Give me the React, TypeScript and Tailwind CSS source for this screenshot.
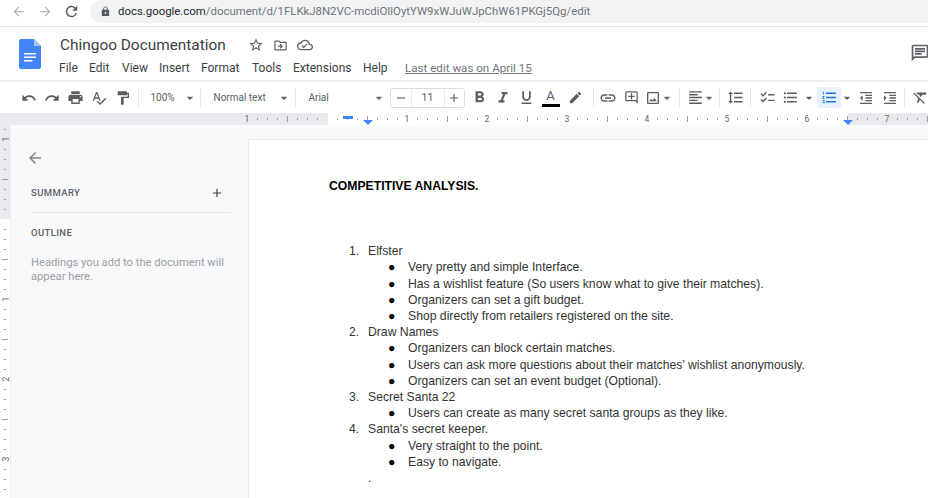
import type { ReactNode } from "react";
import {
  MdAdd,
  MdArrowBack,
  MdArrowDropDown,
  MdArrowForward,
  MdChecklist,
  MdEdit,
  MdFormatAlignLeft,
  MdFormatBold,
  MdFormatClear,
  MdFormatIndentDecrease,
  MdFormatIndentIncrease,
  MdFormatItalic,
  MdFormatLineSpacing,
  MdFormatListBulleted,
  MdFormatListNumbered,
  MdFormatPaint,
  MdFormatUnderlined,
  MdLink,
  MdLock,
  MdOutlineAddComment,
  MdOutlineChat,
  MdOutlineCloudDone,
  MdOutlineDriveFileMove,
  MdOutlineImage,
  MdPrint,
  MdRedo,
  MdRefresh,
  MdRemove,
  MdSpellcheck,
  MdStarBorder,
  MdUndo,
} from "react-icons/md";

const menus = [
  { label: "File", width: "w-[30px]" },
  { label: "Edit", width: "w-[33px]" },
  { label: "View", width: "w-[37px]" },
  { label: "Insert", width: "w-[42px]" },
  { label: "Format", width: "w-[51px]" },
  { label: "Tools", width: "w-[41px]" },
  { label: "Extensions", width: "w-[70px]" },
  { label: "Help", width: "w-[42px]" },
];

const sections = [
  {
    title: "Elfster",
    items: [
      "Very pretty and simple Interface.",
      "Has a wishlist feature (So users know what to give their matches).",
      "Organizers can set a gift budget.",
      "Shop directly from retailers registered on the site.",
    ],
  },
  {
    title: "Draw Names",
    items: [
      "Organizers can block certain matches.",
      "Users can ask more questions about their matches’ wishlist anonymously.",
      "Organizers can set an event budget (Optional).",
    ],
  },
  {
    title: "Secret Santa 22",
    items: ["Users can create as many secret santa groups as they like."],
  },
  {
    title: "Santa's secret keeper.",
    items: ["Very straight to the point.", "Easy to navigate."],
  },
];

const Sep = ({ className = "" }: { className?: string }) => (
  <div className={`h-[18px] w-px shrink-0 bg-[#e3e5e8] ${className}`} />
);

const Btn = ({ children, className = "w-[23.5px]" }: { children: ReactNode; className?: string }) => (
  <div className={`flex h-[24px] shrink-0 items-center justify-center ${className}`}>{children}</div>
);

const Caret = ({ className = "" }: { className?: string }) => (
  <MdArrowDropDown size={16} className={`shrink-0 text-[#5f6368] ${className}`} />
);

const Toolbar = () => (
  <div className="flex h-[31px] items-center overflow-hidden pl-[17px] text-[#5a5e63]">
    <Btn><MdUndo size={16} /></Btn>
    <Btn><MdRedo size={16} /></Btn>
    <Btn><MdPrint size={17} /></Btn>
    <Btn><MdSpellcheck size={16} /></Btn>
    <Btn><MdFormatPaint size={16} /></Btn>
    <Sep className="ml-[3px]" />
    <div className="flex w-[61px] shrink-0 items-center pl-[12px] text-[10px]">
      <span className="w-[31px]">100%</span>
      <Caret />
    </div>
    <Sep />
    <div className="flex w-[94px] shrink-0 items-center pl-[13px] text-[10px]">
      <span className="w-[62px]">Normal text</span>
      <Caret />
    </div>
    <Sep />
    <div className="flex w-[94px] shrink-0 items-center pl-[13px] text-[10px]">
      <span className="w-[62px]">Arial</span>
      <Caret />
    </div>
    <div className="flex h-[20px] w-[75px] shrink-0 items-center rounded-[3px] border border-[#dadce0] text-[10.5px]">
      <div className="flex w-[20px] justify-center"><MdRemove size={14} /></div>
      <div className="flex h-full w-[34px] items-center justify-center border-x border-[#e8eaed]">11</div>
      <div className="flex flex-1 justify-center"><MdAdd size={14} /></div>
    </div>
    <Btn className="ml-[3px] w-[24px]"><MdFormatBold size={19} /></Btn>
    <Btn><MdFormatItalic size={18} /></Btn>
    <Btn><MdFormatUnderlined size={17} /></Btn>
    <div className="flex h-[24px] w-[24px] shrink-0 flex-col items-center justify-start pt-[2px]">
      <span className="text-[13px] leading-[15px]">A</span>
      <div className="mt-[1px] h-[3px] w-[18px] bg-black" />
    </div>
    <Btn className="w-[26px]"><MdEdit size={15} /></Btn>
    <Sep className="ml-[4px]" />
    <Btn className="ml-[2px] w-[24px]"><MdLink size={18} /></Btn>
    <Btn><MdOutlineAddComment size={15} /></Btn>
    <div className="flex w-[36px] shrink-0 items-center pl-[2px]">
      <MdOutlineImage size={16} />
      <Caret className="-ml-[2px]" />
    </div>
    <Sep className="mr-[4px]" />
    <div className="flex w-[35px] shrink-0 items-center pl-[2.5px]">
      <MdFormatAlignLeft size={17} />
      <Caret className="-ml-[3px]" />
    </div>
    <Sep className="mr-[2px]" />
    <Btn className="w-[27px]"><MdFormatLineSpacing size={17} /></Btn>
    <Sep className="ml-[1px]" />
    <Btn className="ml-[4px] w-[24px]"><MdChecklist size={17} /></Btn>
    <div className="flex w-[38px] shrink-0 items-center pl-[3px]">
      <MdFormatListBulleted size={17} />
      <Caret className="ml-[1.5px]" />
    </div>
    <div className="flex h-[21px] w-[24px] shrink-0 items-center justify-center rounded-[2px] bg-[#e8f0fe] text-[#1a73e8]">
      <MdFormatListNumbered size={17} />
    </div>
    <Caret className="ml-[-2px]" />
    <Btn className="ml-[-1px] w-[24px]"><MdFormatIndentDecrease size={16} /></Btn>
    <Btn className="w-[23px]"><MdFormatIndentIncrease size={16} /></Btn>
    <Sep className="ml-[3px]" />
    <Btn className="ml-[3px] w-[24px]"><MdFormatClear size={17} /></Btn>
  </div>
);

const Ruler = () => {
  const ticks = Array.from({ length: 69 }, (_, i) => 247 + i * 10).filter((x) => (x - 247) % 80 !== 0);
  return (
    <svg width="928" height="12" className="block">
      <rect width="928" height="12" fill="#e8eaed" />
      <rect x="328" width="520" height="12" fill="#ffffff" />
      {ticks.map((x) => {
        const long = (x - 247) % 40 === 0;
        return <rect key={x} x={x} y={long ? 3 : 5} width="1" height={long ? 6 : 2} fill="#9b9ea3" />;
      })}
      {["1", "", "1", "2", "3", "4", "5", "6", "7"].map((n, i) =>
        n ? (
          <text key={i} x={247 + i * 80} y="9" textAnchor="middle" fontSize="8.5" fontFamily="Roboto, sans-serif" fill="#5f6368">
            {n}
          </text>
        ) : null,
      )}
      <rect x="343" y="3" width="10" height="3" fill="#4285f4" />
      <path d="M363 7h10l-5 5z" fill="#4285f4" />
      <path d="M843 7h10l-5 5z" fill="#4285f4" />
    </svg>
  );
};

const SideRuler = () => {
  const ticks = Array.from({ length: 38 }, (_, i) => 4 + i * 10);
  return (
    <svg width="10" height="373" className="block shrink-0">
      <rect width="10" height="373" fill="#ffffff" />
      <rect width="10" height="94" fill="#e8eaed" />
      {ticks.map((y) => {
        const isNumber = (y - 14) % 80 === 0;
        const long = (y - 14) % 40 === 0;
        if (isNumber) return null;
        return <rect key={y} x={long ? 2 : 4} y={y} width={long ? 6 : 2} height="1" fill="#9b9ea3" />;
      })}
      {[14, 174, 254, 334].map((y, i) => (
        <text
          key={y}
          x="6"
          y={y}
          transform={`rotate(-90 6 ${y})`}
          textAnchor="middle"
          dominantBaseline="central"
          fontSize="8.5"
          fontFamily="Roboto, sans-serif"
          fill="#5f6368"
        >
          {["1", "1", "2", "3"][i]}
        </text>
      ))}
    </svg>
  );
};

const DocsLogo = () => (
  <svg width="22" height="30" viewBox="0 0 22 30" className="shrink-0">
    <path d="M2 0h13l7 7v21a2 2 0 0 1-2 2H2a2 2 0 0 1-2-2V2a2 2 0 0 1 2-2z" fill="#4285f4" />
    <path d="M15 0l7 7h-7z" fill="#a1c2fa" />
    <path d="M5 14h12v1.6H5zM5 17.5h12v1.6H5zM5 21h8.5v1.6H5z" fill="#ffffff" />
  </svg>
);

export default function App() {
  return (
    <div className="flex h-screen w-full flex-col overflow-hidden bg-white font-['Roboto',sans-serif]">
      {/* browser bar */}
      <div className="flex h-[27px] shrink-0 items-start border-b border-[#e6e6e6]">
        <div className="flex h-[23px] w-[90px] shrink-0 items-center pl-[11px]">
          <MdArrowBack size={15} className="text-[#b4b6b9]" />
          <MdArrowForward size={15} className="ml-[12px] text-[#b4b6b9]" />
          <MdRefresh size={17} className="ml-[10px] text-[#55585c]" />
        </div>
        <div className="flex h-[23px] flex-1 items-center rounded-l-[12px] bg-[#f1f3f4] pl-[10px] text-[11.4px] text-[#70757a]">
          <MdLock size={11} className="mr-[7px] text-[#55585c]" />
          <span>
            <span className="text-[#26282b]">docs.google.com</span>/document/d/1FLKkJ8N2VC-mcdiOIlOytYW9xWJuWJpChW61PKGj5Qg/edit
          </span>
        </div>
      </div>

      {/* docs header */}
      <div className="flex h-[55px] shrink-0 border-b-2 border-[#eeeff0] pl-[19px]">
        <div className="pt-[12px]"><DocsLogo /></div>
        <div className="ml-[18px] pt-[8px]">
          <div className="flex h-[20px] items-center">
            <span className="w-[189px] pl-[1px] text-[15.4px] leading-5 text-[#3c4043]">Chingoo Documentation</span>
            <MdStarBorder size={16} className="text-[#5f6368]" />
            <MdOutlineDriveFileMove size={15} className="ml-[9px] text-[#5f6368]" />
            <MdOutlineCloudDone size={16} className="ml-[9px] text-[#5f6368]" />
          </div>
          <div className="mt-[5px] flex items-center text-[12px] leading-[16px] text-[#3c4043]">
            {menus.map((menu) => (
              <span key={menu.label} className={menu.width}>{menu.label}</span>
            ))}
            <span className="text-[11.6px] text-[#70757a] underline">Last edit was on April 15</span>
          </div>
        </div>
        <div className="ml-auto pt-[16px]">
          <MdOutlineChat size={20} className="-mr-[2px] text-[#5f6368]" />
        </div>
      </div>

      <Toolbar />
      <Ruler />

      {/* body */}
      <div className="flex min-h-0 flex-1 bg-[#f8f9fa]">
        <SideRuler />
        <div className="w-[238px] shrink-0 border-l border-[#eceef0] pl-[20px] pr-[17px] pt-[24px]">
          <MdArrowBack size={18} className="-ml-[5px] text-[#80868b]" />
          <div className="mt-[18px] flex h-[16px] items-center justify-between text-[9.5px] font-medium tracking-[0.4px] text-[#5f6368]">
            <span>SUMMARY</span>
            <MdAdd size={14} className="mr-[7px] text-[#3c4043]" />
          </div>
          <div className="mt-[11px] h-px bg-[#e3e5e8]" />
          <div className="mt-[14px] text-[9.5px] font-medium leading-[12px] tracking-[0.4px] text-[#5f6368]">OUTLINE</div>
          <p className="mt-[17px] text-[11.2px] leading-[14px] text-[#9aa0a6]">
            Headings you add to the document will appear here.
          </p>
        </div>
        <div className="mt-[14px] flex-1 border-l border-t border-[#e8eaed] bg-white pl-[80px] pt-[38px] font-['Liberation_Sans',sans-serif] text-[12.2px] leading-[16.2px] text-[#333]">
          <div className="font-bold text-black">COMPETITIVE ANALYSIS.</div>
          <ol className="mt-[49px]">
            {sections.map((section, i) => (
              <li key={section.title}>
                <div className="flex">
                  <span className="w-[39px] pl-[20px]">{i + 1}.</span>
                  <span>{section.title}</span>
                </div>
                <ul>
                  {section.items.map((item) => (
                    <li key={item} className="flex whitespace-nowrap">
                      <span className="w-[79px] shrink-0 pl-[59px] text-black">●</span>
                      <span>{item}</span>
                    </li>
                  ))}
                </ul>
              </li>
            ))}
          </ol>
          <div className="pl-[39px]">.</div>
        </div>
      </div>
    </div>
  );
}
